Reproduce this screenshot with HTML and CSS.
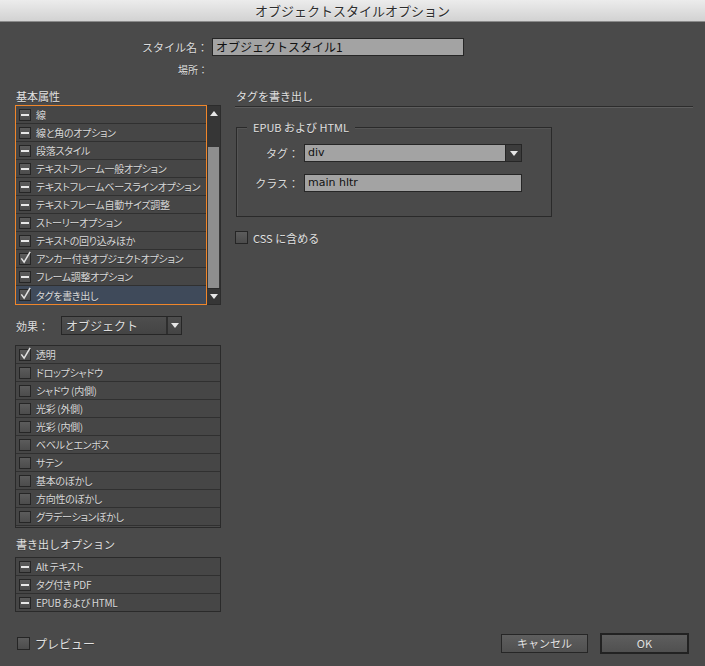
FILE: index.html
```html
<!DOCTYPE html>
<html lang="ja">
<head>
    <meta charset="UTF-8">
    <title>オブジェクトスタイルオプション</title>
    <link rel="stylesheet" href="styles.css">
</head>
<body>
    <div class="titlebar">オブジェクトスタイルオプション</div>

    <div class="name-row">
        <span class="label">スタイル名：</span>
        <div class="field name-field">オブジェクトスタイル1</div>
    </div>
    <div class="place-row">
        <span class="label small">場所：</span>
    </div>

    <div class="main">
        <div class="left">
            <div class="heading">基本属性</div>
            <div class="attr-wrap">
                <div class="attr-list">
                    <div class="row"><span class="cb mixed"></span>線</div>
                    <div class="row"><span class="cb mixed"></span>線と角のオプション</div>
                    <div class="row"><span class="cb mixed"></span>段落スタイル</div>
                    <div class="row"><span class="cb mixed"></span>テキストフレーム一般オプション</div>
                    <div class="row"><span class="cb mixed"></span>テキストフレームベースラインオプション</div>
                    <div class="row"><span class="cb mixed"></span>テキストフレーム自動サイズ調整</div>
                    <div class="row"><span class="cb mixed"></span>ストーリーオプション</div>
                    <div class="row"><span class="cb mixed"></span>テキストの回り込みほか</div>
                    <div class="row"><span class="cb checked"><svg viewBox="0 0 14 16"><path d="M2.5 9 L5.5 13 L12 2"/></svg></span>アンカー付きオブジェクトオプション</div>
                    <div class="row"><span class="cb mixed"></span>フレーム調整オプション</div>
                    <div class="row selected"><span class="cb checked"><svg viewBox="0 0 14 16"><path d="M2.5 9 L5.5 13 L12 2"/></svg></span>タグを書き出し</div>
                </div>
                <div class="scrollbar">
                    <div class="arrow up"></div>
                    <div class="track"></div>
                    <div class="thumb"></div>
                    <div class="arrow down"></div>
                </div>
            </div>

            <div class="fx-row">
                <span class="fx-label">効果：</span>
                <div class="dropdown">
                    <span class="dd-text">オブジェクト</span>
                    <span class="dd-btn"></span>
                </div>
            </div>

            <div class="fx-list">
                <div class="row"><span class="cb checked"><svg viewBox="0 0 14 16"><path d="M2.5 9 L5.5 13 L12 2"/></svg></span>透明</div>
                <div class="row"><span class="cb"></span>ドロップシャドウ</div>
                <div class="row"><span class="cb"></span>シャドウ (内側)</div>
                <div class="row"><span class="cb"></span>光彩 (外側)</div>
                <div class="row"><span class="cb"></span>光彩 (内側)</div>
                <div class="row"><span class="cb"></span>ベベルとエンボス</div>
                <div class="row"><span class="cb"></span>サテン</div>
                <div class="row"><span class="cb"></span>基本のぼかし</div>
                <div class="row"><span class="cb"></span>方向性のぼかし</div>
                <div class="row"><span class="cb"></span>グラデーションぼかし</div>
            </div>

            <div class="heading export-heading">書き出しオプション</div>
            <div class="export-list">
                <div class="row"><span class="cb mixed"></span>Alt テキスト</div>
                <div class="row"><span class="cb mixed"></span>タグ付き PDF</div>
                <div class="row"><span class="cb mixed"></span>EPUB および HTML</div>
            </div>
        </div>

        <div class="right">
            <div class="heading section-title">タグを書き出し</div>
            <div class="group">
                <span class="legend">EPUB および HTML</span>
                <div class="group-row">
                    <span class="label">タグ：</span>
                    <div class="field select-field">
                        <span class="value">div</span>
                        <span class="sel-btn"></span>
                    </div>
                </div>
                <div class="group-row">
                    <span class="label">クラス：</span>
                    <div class="field"><span class="value">main hltr</span></div>
                </div>
            </div>
            <div class="check-row">
                <span class="cb big"></span>
                <span>CSS に含める</span>
            </div>
        </div>
    </div>

    <div class="footer">
        <div class="check-row preview">
            <span class="cb big"></span>
            <span>プレビュー</span>
        </div>
        <div class="buttons">
            <div class="button">キャンセル</div>
            <div class="button default">OK</div>
        </div>
    </div>
</body>
</html>
```

FILE: styles.css
```css
body {
    margin: 0;
    width: 705px;
    height: 666px;
    overflow: hidden;
    background: #4a4a4a;
    color: #dcdcdc;
    font-family: "Noto Sans CJK JP", "DejaVu Sans", sans-serif;
    font-size: 11px;
    text-shadow: 0 1px 0 rgba(0, 0, 0, 0.25);
}

.titlebar {
    height: 21px;
    line-height: 21px;
    text-align: center;
    font-size: 13px;
    color: #2e2e2e;
    text-shadow: 0 1px 0 rgba(255, 255, 255, 0.5);
    background: linear-gradient(#ececec, #d2d2d2);
    border-bottom: 1px solid #8a8a8a;
}

.label {
    text-align: right;
    color: #dcdcdc;
}

.small {
    font-size: 10px;
}

/* スタイル名 */
.name-row {
    display: grid;
    grid-template-columns: 208px 252px;
    column-gap: 4px;
    align-items: center;
    margin-top: 16px;
    height: 18px;
}

.place-row {
    display: grid;
    grid-template-columns: 208px;
    margin-top: 7px;
    height: 14px;
    line-height: 14px;
}

.field {
    height: 18px;
    box-sizing: border-box;
    background: #a3a3a3;
    border: 1px solid #262626;
    color: #111;
    text-shadow: none;
    font-size: 12px;
    line-height: 16px;
    padding-left: 3px;
    display: flex;
    align-items: center;
}

.value {
    font-family: "DejaVu Sans", sans-serif;
    font-size: 11px;
}

/* main columns */
.main {
    display: flex;
    margin-top: 11px;
    padding-left: 15px;
}

.left {
    width: 206px;
}

.right {
    width: 458px;
    margin-left: 14px;
}

.heading {
    height: 16px;
    line-height: 16px;
    font-size: 11px;
    color: #e2e2e2;
    padding-left: 1px;
    margin-bottom: 1px;
}

/* lists */
.row {
    height: 17px;
    border-bottom: 1px solid #303030;
    display: flex;
    align-items: center;
    gap: 5px;
    padding-left: 3px;
    font-size: 10px;
    font-feature-settings: "palt";
    letter-spacing: -0.3px;
    color: #d8d8d8;
    white-space: nowrap;
    background: #464646;
}

.row.selected {
    background: #3f4a5a;
}

.attr-wrap {
    display: flex;
    height: 200px;
}

.attr-list {
    width: 192px;
    box-sizing: border-box;
    border: 1px solid #f0862a;
    overflow: hidden;
}

.attr-list .row:last-child {
    border-bottom: none;
    height: 18px;
}

.scrollbar {
    width: 14px;
    box-sizing: border-box;
    border: 1px solid #2c2c2c;
    border-left: none;
    background: #363636;
    display: flex;
    flex-direction: column;
}

.arrow {
    height: 15px;
    display: flex;
    justify-content: center;
    align-items: center;
    background: #363636;
}

.arrow::after {
    content: '';
    border-left: 4px solid transparent;
    border-right: 4px solid transparent;
}

.arrow.up::after {
    border-bottom: 5px solid #e6e6e6;
}

.arrow.down {
    border-top: 1px solid #2a2a2a;
}

.arrow.down::after {
    border-top: 5px solid #e6e6e6;
}

.track {
    height: 26px;
}

.thumb {
    flex: 1;
    background: #8e8e8e;
    margin: 0 1px;
}

/* 効果 */
.fx-row {
    display: flex;
    align-items: center;
    margin-top: 11px;
    height: 19px;
}

.fx-label {
    width: 45px;
    padding-left: 1px;
    font-size: 11px;
}

.dropdown {
    width: 121px;
    height: 19px;
    box-sizing: border-box;
    border: 1px solid #262626;
    background: linear-gradient(#4e4e4e, #444);
    display: flex;
    align-items: center;
}

.dd-text {
    flex: 1;
    padding-left: 4px;
    font-size: 12px;
    color: #dedede;
}

.dd-btn {
    width: 13px;
    height: 100%;
    border-left: 2px solid #2e2e2e;
    display: flex;
    align-items: center;
    justify-content: center;
}

.dd-btn::after,
.sel-btn::after {
    content: '';
    border-left: 4px solid transparent;
    border-right: 4px solid transparent;
    border-top: 5px solid #e6e6e6;
}

.fx-list {
    margin-top: 10px;
    border: 1px solid #2a2a2a;
    padding-bottom: 1px;
}

.export-heading {
    margin-top: 8px;
    margin-bottom: 5px;
}

.export-list {
    border: 1px solid #2a2a2a;
}

.export-list .row:last-child {
    border-bottom: none;
}

/* checkboxes */
.cb {
    position: relative;
    width: 12px;
    height: 12px;
    flex: none;
    box-sizing: border-box;
    border: 1px solid #252525;
    background: linear-gradient(#5c5c5c, #4c4c4c);
}

.cb.mixed::after {
    content: '';
    position: absolute;
    left: 1px;
    right: 1px;
    top: 4px;
    height: 2px;
    background: #e8e8e8;
}

.cb svg {
    position: absolute;
    left: -1px;
    top: -4px;
    width: 13px;
    height: 15px;
    overflow: visible;
}

.cb svg path {
    fill: none;
    stroke: #e4e4e4;
    stroke-width: 1.6;
}

.cb.big {
    width: 13px;
    height: 13px;
}

/* right side */
.section-title {
    padding-bottom: 2px;
    border-bottom: 1px solid #2c2c2c;
    box-shadow: 0 1px 0 #5e5e5e;
    margin-bottom: 0;
}

.group {
    position: relative;
    margin-top: 20px;
    margin-left: 1px;
    width: 316px;
    height: 90px;
    box-sizing: border-box;
    border: 1px solid #2a2a2a;
    box-shadow: inset 1px 1px 0 #555;
    padding-top: 16px;
}

.legend {
    position: absolute;
    top: -8px;
    left: 10px;
    padding: 0 6px;
    background: #4a4a4a;
    line-height: 15px;
    font-size: 11px;
    color: #e0e0e0;
}

.group-row {
    display: grid;
    grid-template-columns: 62px 218px;
    column-gap: 5px;
    align-items: center;
    height: 18px;
    margin-bottom: 12px;
}

.select-field .value {
    flex: 1;
}

.sel-btn {
    width: 15px;
    height: 100%;
    background: #3c3c3c;
    border-left: 1px solid #262626;
    display: flex;
    align-items: center;
    justify-content: center;
}

.check-row {
    display: flex;
    align-items: center;
    gap: 5px;
    height: 13px;
    margin-top: 14px;
    font-size: 11px;
    color: #e0e0e0;
}

/* footer */
.footer {
    display: flex;
    justify-content: space-between;
    align-items: center;
    margin-top: 21px;
    padding: 0 16px 0 17px;
    height: 21px;
}

.check-row.preview {
    margin-top: 0;
    font-size: 12px;
}

.buttons {
    display: flex;
    gap: 12px;
    align-items: center;
}

.button {
    width: 87px;
    height: 19px;
    box-sizing: border-box;
    border: 1px solid #262626;
    background: linear-gradient(#5e5e5e, #505050);
    text-align: center;
    line-height: 17px;
    font-size: 11px;
    color: #e2e2e2;
}

.button.default {
    width: 89px;
    height: 21px;
    border: 2px solid #222;
    line-height: 17px;
}
```
